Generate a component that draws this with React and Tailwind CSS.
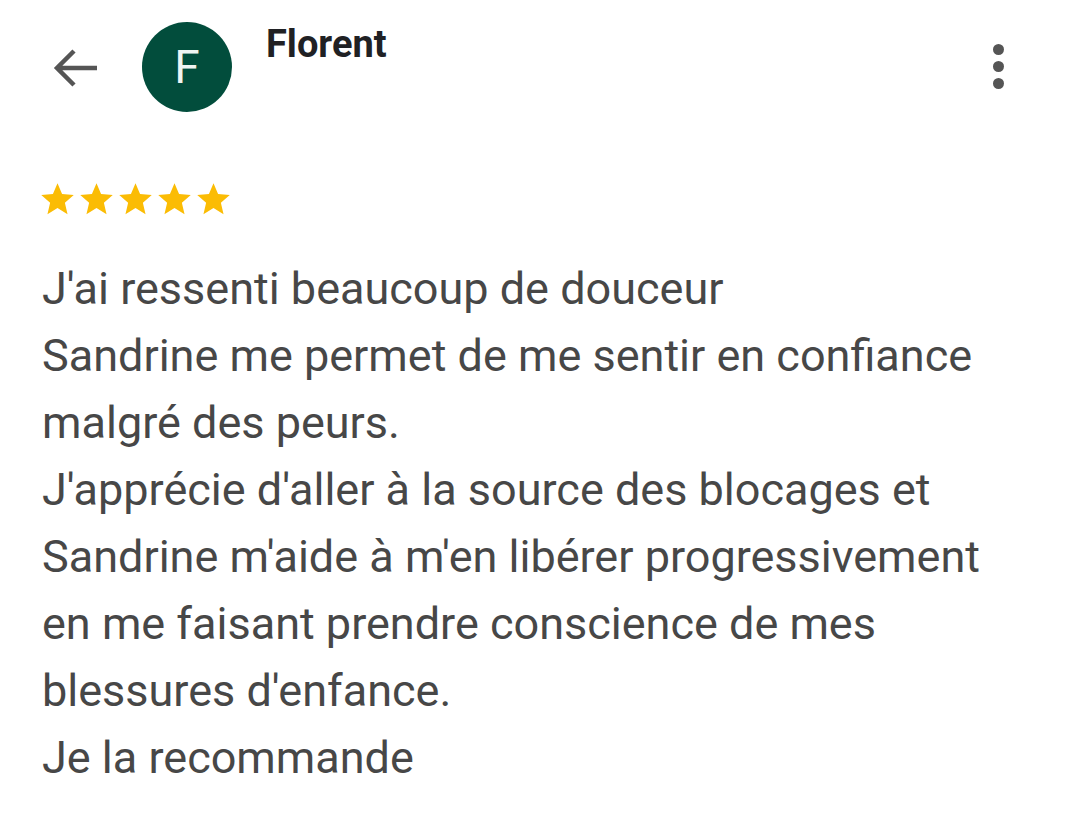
import React from "react";

const Star = () => (
  <svg width="39" height="39" viewBox="0 0 24 24" className="block shrink-0">
    <path fill="#fbbc04" d="M12 17.27L18.18 21l-1.64-7.03L22 9.24l-7.19-.61L12 2 9.19 8.63 2 9.24l5.46 4.73L5.82 21z" />
  </svg>
);

export default function App() {
  const lines = [
    "J'ai ressenti beaucoup de douceur",
    "Sandrine me permet de me sentir en confiance",
    "malgré des peurs.",
    "J'apprécie d'aller à la source des blocages et",
    "Sandrine m'aide à m'en libérer progressivement",
    "en me faisant prendre conscience de mes",
    "blessures d'enfance.",
    "Je la recommande",
  ];
  return (
    <div className="w-[1076px] h-[819px] bg-white overflow-hidden" style={{ fontFamily: "Roboto, 'Noto Sans', sans-serif" }}>
      <div className="flex items-start pt-[22px] pl-[50px] pr-[72px]">
        <div className="mt-[26px] w-[50px] h-[40px] flex items-center">
          <svg width="50" height="40" viewBox="0 0 50 40">
            <path d="M47 20H8M24 3L7 20l17 17" fill="none" stroke="#555" strokeWidth="4.5" />
          </svg>
        </div>
        <div className="ml-[42px] w-[90px] h-[90px] rounded-full bg-[#024d3c] flex items-center justify-center text-[#f0f5f3] text-[46px] leading-none">F</div>
        <div className="ml-[34px] text-[38px] font-bold text-[#202124] leading-none mt-[3px]">Florent</div>
        <div className="ml-auto mt-[22px] flex flex-col gap-[6px] items-center">
          <div className="w-[11px] h-[11px] rounded-full bg-[#555]" />
          <div className="w-[11px] h-[11px] rounded-full bg-[#555]" />
          <div className="w-[11px] h-[11px] rounded-full bg-[#555]" />
        </div>
      </div>
      <div className="pl-[38px] mt-[68px] flex">
        <Star /><Star /><Star /><Star /><Star />
      </div>
      <div className="pl-[42px] mt-[36px] text-[45px] leading-[67px] text-[#474747]">
        {lines.map((l, i) => (
          <div key={i} className="whitespace-nowrap">{l}</div>
        ))}
      </div>
    </div>
  );
}
